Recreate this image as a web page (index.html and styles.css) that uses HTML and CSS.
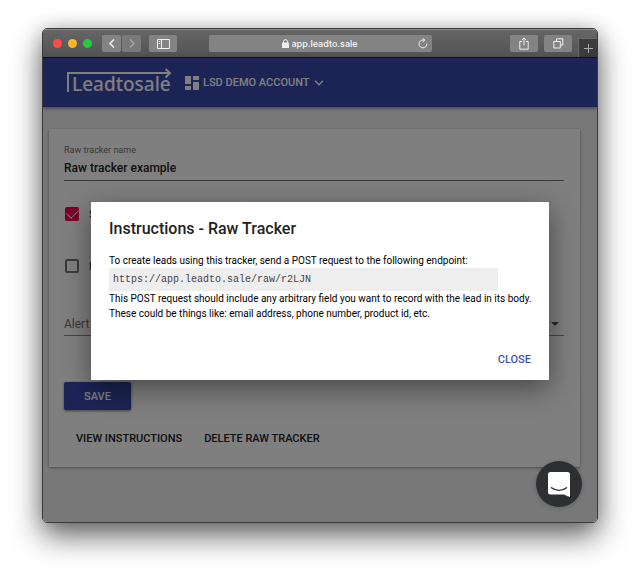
FILE: index.html
```html
<!DOCTYPE html>
<html lang="en">
<head>
    <meta charset="UTF-8">
    <meta name="viewport" content="width=device-width, initial-scale=1.0">
    <title>Leadtosale</title>
    <link rel="stylesheet" href="styles.css">
</head>
<body>
<div class="window">
    <div class="toolbar">
        <div class="lights">
            <span class="light red"></span>
            <span class="light yellow"></span>
            <span class="light green"></span>
        </div>
        <div class="nav">
            <button class="tool" aria-label="Back">
                <svg width="8" height="11" viewBox="0 0 8 11"><path d="M6 1.5 2 5.5l4 4" stroke-width="1.6"/></svg>
            </button>
            <button class="tool off" aria-label="Forward">
                <svg width="8" height="11" viewBox="0 0 8 11"><path d="m2 1.5 4 4-4 4" stroke-width="1.3"/></svg>
            </button>
        </div>
        <button class="tool sidebar" aria-label="Sidebar">
            <svg width="13" height="10" viewBox="0 0 13 10"><path d="M.5.5h12v9H.5zM4.5.5v9M1.8 2.5h1.4M1.8 4.5h1.4"/></svg>
        </button>
        <div class="address">
            <span class="side"></span>
            <svg class="lock" width="7" height="9" viewBox="0 0 7 9"><rect x="0" y="4" width="7" height="5" rx=".6"/><path d="M1.5 4V2.6a2 2 0 0 1 4 0V4"/></svg>
            <input class="url" type="text" value="app.leadto.sale" aria-label="Address">
            <span class="side">
                <button class="reload" aria-label="Reload">
                    <svg width="10" height="11" viewBox="0 0 10 11"><path d="M8.8 5.6A3.9 3.9 0 1 1 5 2h1.6M4.8.2 6.8 2 4.8 3.9"/></svg>
                </button>
            </span>
        </div>
        <button class="tool wide" aria-label="Share">
            <svg width="10" height="13" viewBox="0 0 10 13"><path d="M3 4.5H.8v7.7h8.4V4.5H7M5 8.5V1M2.8 3 5 .9 7.2 3"/></svg>
        </button>
        <button class="tool wide" aria-label="Show tabs">
            <svg width="11" height="11" viewBox="0 0 11 11"><path d="M.8 3.5h6.5V10H.8zM3.5 3.2V.8h6.3v6.3H7.6"/></svg>
        </button>
        <button class="newtab" aria-label="New tab">
            <svg width="9" height="9" viewBox="0 0 9 9"><path d="M4.5 0v9M0 4.5h9"/></svg>
        </button>
    </div>

    <div class="page">
        <header class="header">
            <a class="logo" href="#">
                <svg class="arrow" width="105" height="24" viewBox="0 0 105 24"><path d="M1 24V5h101M98.500 1l4.500 4-4.500 4.500"/></svg>
                <span>Leadtosale</span>
            </a>
            <button class="account">
                <svg width="14" height="14" viewBox="0 0 14 14"><path d="M0 0h6v8H0zM8 0h6v4H8zM0 10h6v4H0zM8 6h6v8H8z"/></svg>
                <span>LSD DEMO ACCOUNT</span>
                <svg class="chevron" width="10" height="6" viewBox="0 0 10 6"><path d="m1 .8 4 4 4-4"/></svg>
            </button>
        </header>

        <form class="card">
            <div class="field">
                <label for="name">Raw tracker name</label>
                <input id="name" type="text" value="Raw tracker example">
            </div>
            <label class="check"><input type="checkbox" checked> S</label>
            <label class="check"><input type="checkbox"> E</label>
            <div class="select">
                <select aria-label="Alert">
                    <option>Alert</option>
                </select>
                <svg width="8" height="4" viewBox="0 0 8 4"><path d="M0 0h8L4 4z"/></svg>
            </div>
            <button class="save" type="button">SAVE</button>
            <div class="links">
                <button type="button">VIEW INSTRUCTIONS</button>
                <button type="button">DELETE RAW TRACKER</button>
            </div>
        </form>

        <div class="overlay">
            <dialog class="dialog" open aria-labelledby="title">
                <h2 id="title">Instructions - Raw Tracker</h2>
                <p>To create leads using this tracker, send a POST request to the following endpoint:</p>
                <code>https://app.leadto.sale/raw/r2LJN</code>
                <p>This POST request should include any arbitrary field you want to record with the lead in its body. These could be things like: email address, phone number, product id, etc.</p>
                <button class="close">CLOSE</button>
            </dialog>
        </div>

        <button class="chat" aria-label="Open chat">
            <svg width="22" height="25" viewBox="0 0 22 25"><path d="M2.500 0h17A2.500 2.500 0 0 1 22 2.500V25c-2-.5-4-1.500-6-2.500H2.500A2.500 2.500 0 0 1 0 20V2.500A2.500 2.500 0 0 1 2.500 0z" fill="#fff"/><path d="M3.500 15.800c4 3.400 11 3.400 15 0" fill="none" stroke="#2e2f32" stroke-width="1.400" stroke-linecap="round"/></svg>
        </button>
    </div>
</div>
</body>
</html>
```

FILE: styles.css
```css
* {
    box-sizing: border-box;
}
body {
    margin: 0;
    padding: 28px 42px 56px;
    background: #fff;
    font-family: Roboto, sans-serif;
    font-size: 11px;
}
button {
    margin: 0;
    padding: 0;
    border: none;
    background: none;
    font: inherit;
}
svg {
    display: block;
    flex: none;
}
.window {
    border: 1px solid #3a3a3a;
    border-radius: 5px;
    overflow: hidden;
    box-shadow: 0 13px 30px rgba(0, 0, 0, 0.6), 0 0 18px rgba(0, 0, 0, 0.15);
}

/* browser toolbar */
.toolbar {
    display: flex;
    align-items: center;
    height: 29px;
    padding-left: 10px;
    background: linear-gradient(#666, #525252);
    border-top: 1px solid #8a8a8a;
    border-bottom: 1px solid #141414;
}
.toolbar svg {
    fill: none;
    stroke: #f0f0f0;
}
.lights {
    display: flex;
    gap: 6px;
    margin-right: 10px;
}
.light {
    width: 9px;
    height: 9px;
    border-radius: 50%;
}
.red {
    background: #fc4b48;
}
.yellow {
    background: #fdb52b;
}
.green {
    background: #29c73f;
}
.nav {
    display: flex;
    gap: 1px;
    margin-right: 8px;
}
.tool {
    display: flex;
    align-items: center;
    justify-content: center;
    width: 19px;
    height: 17px;
    border-radius: 2px;
    background: #838383;
}
.off {
    background: #797979;
}
.toolbar .off svg {
    stroke: #a8a8a8;
}
.sidebar {
    width: 28px;
    margin-right: 32px;
}
.address {
    display: flex;
    flex: 1;
    align-items: center;
    gap: 3px;
    height: 17px;
    margin-right: 78px;
    border-radius: 2px;
    background: #838383;
}
.side {
    display: flex;
    flex: 1;
    justify-content: flex-end;
    padding-right: 4px;
}
.toolbar .lock {
    fill: #f0f0f0;
}
.lock path {
    fill: none;
}
.url {
    width: 68px;
    padding: 0;
    border: none;
    background: none;
    color: #f8f8f8;
    font: 500 9px Inter, sans-serif;
}
.wide {
    width: 28px;
    margin-right: 6px;
}
.newtab {
    display: flex;
    align-items: center;
    justify-content: center;
    align-self: flex-end;
    width: 19px;
    height: 19px;
    border: 1px solid #6a6a6a;
    border-width: 1px 0 0 1px;
    background: #3c3c3c;
}
.toolbar .newtab svg {
    stroke: #aaa;
}

/* app */
.page {
    position: relative;
    padding-bottom: 55px;
    background: #f0f0f0;
}
.header {
    display: flex;
    align-items: center;
    gap: 13px;
    height: 49px;
    padding-left: 24px;
    background: #3949ab;
    box-shadow: 0 1px 4px rgba(0, 0, 0, 0.5);
    color: #fff;
}
.logo {
    position: relative;
    width: 105px;
    padding: 10px 0 8px 5px;
    color: #fff;
    font: 500 19px/24px "Noto Sans", sans-serif;
    text-decoration: none;
}
.arrow {
    position: absolute;
    top: 6px;
    left: 0;
    fill: none;
    stroke: #fff;
    stroke-width: 2;
}
.account {
    display: flex;
    align-items: center;
    gap: 4px;
    color: #fff;
    font-weight: 500;
}
.account svg {
    fill: #fff;
}
.account .chevron {
    fill: none;
    stroke: #fff;
    stroke-width: 1.5;
}
.card {
    margin: 22px 17px 0 6px;
    padding: 16px 16px 20px 15px;
    border-radius: 1px;
    background: #fff;
    box-shadow: 0 1px 3px rgba(0, 0, 0, 0.4);
}
.field {
    display: flex;
    flex-direction: column;
    border-bottom: 1px solid #777;
}
.field label {
    color: #6f6f6f;
    font-size: 9px;
    line-height: 11px;
}
.field input {
    padding: 0;
    border: none;
    background: none;
    color: #222;
    font: 500 12px/24px Roboto, sans-serif;
}
.check {
    display: flex;
    align-items: center;
    gap: 10px;
    height: 14px;
    margin-top: 26px;
    margin-bottom: 38px;
    color: #333;
}
.check + .check {
    margin-top: 0;
}
.check input {
    appearance: none;
    width: 14px;
    height: 14px;
    margin: 0 0 0 1px;
    border: 2px solid #757575;
    border-radius: 2px;
}
.check input:checked {
    border: none;
    background: #f50057;
}
.check input:checked::before {
    content: "";
    display: block;
    width: 10px;
    height: 6px;
    margin: 2px 0 0 2px;
    border: solid #fff;
    border-width: 0 0 1px 1px;
    transform: rotate(-45deg);
}
.select {
    display: flex;
    align-items: center;
    padding: 2px 5px 0 0;
    border-bottom: 1px solid #8d8d8d;
}
.select select {
    appearance: none;
    flex: 1;
    height: 22px;
    padding: 0;
    border: none;
    background: none;
    color: #757575;
    font: 12px Roboto, sans-serif;
}
.select svg {
    fill: #555;
}
.save {
    display: block;
    width: 67px;
    height: 28px;
    margin-top: 46px;
    border-radius: 2px;
    background: #3949ab;
    box-shadow: 0 1px 3px rgba(0, 0, 0, 0.5);
    color: #fff;
    font-weight: 500;
}
.links {
    display: flex;
    gap: 22px;
    margin-top: 20px;
    padding-left: 12px;
}
.links button {
    color: #222;
    font-weight: 500;
    line-height: 17px;
}

/* dialog */
.overlay {
    position: absolute;
    inset: 0;
    display: flex;
    align-items: center;
    justify-content: center;
    padding: 2px 48px 0;
    background: rgba(0, 0, 0, 0.5);
}
.dialog {
    position: static;
    flex: 1;
    display: flex;
    flex-direction: column;
    margin: 0;
    padding: 18px 12px 13px 18px;
    border: none;
    border-radius: 1px;
    background: #fff;
    box-shadow: 0 8px 28px rgba(0, 0, 0, 0.45);
    color: #000;
    font-size: 10px;
}
.dialog h2 {
    margin: 0 0 15px;
    color: #222;
    font-size: 16px;
    font-weight: 500;
    line-height: 18px;
}
.dialog p {
    margin: 0;
    line-height: 15px;
}
.dialog code {
    width: 91%;
    padding: 0 4px;
    background: #eee;
    color: #444;
    font: 10px/23px "Liberation Mono", monospace;
}
.close {
    align-self: flex-end;
    margin: 31px 6px 0 0;
    color: #3f51b5;
    font-size: 11px;
    font-weight: 500;
    line-height: 15px;
}
.chat {
    position: absolute;
    right: 15px;
    bottom: 15px;
    display: flex;
    align-items: center;
    justify-content: center;
    width: 46px;
    height: 46px;
    border-radius: 50%;
    background: #2e2f32;
    box-shadow: 0 1px 5px rgba(0, 0, 0, 0.2);
}
```
